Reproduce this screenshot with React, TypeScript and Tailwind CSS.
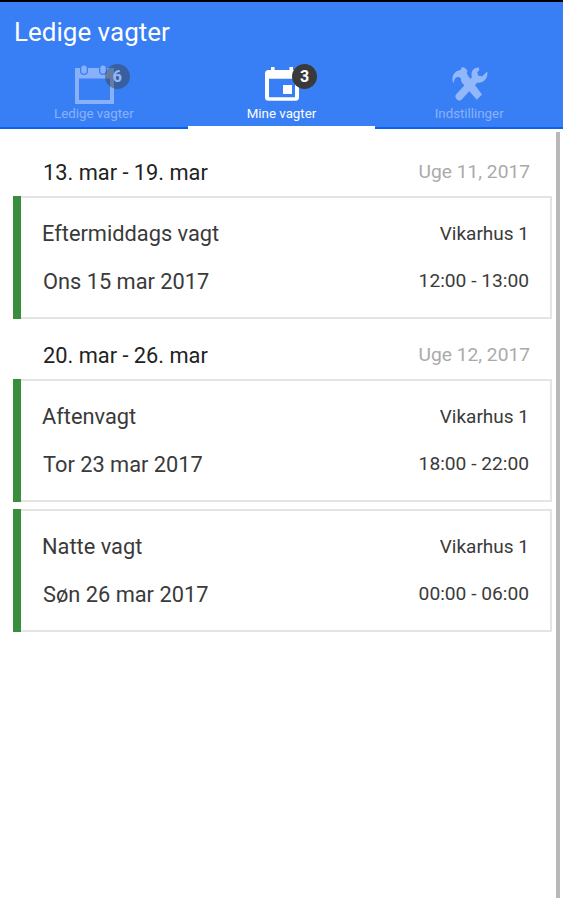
const weeks = [
    {
        range: "13. mar - 19. mar",
        week: "Uge 11, 2017",
        shifts: [
            { name: "Eftermiddags vagt", place: "Vikarhus 1", date: "Ons 15 mar 2017", time: "12:00 - 13:00" },
        ],
    },
    {
        range: "20. mar - 26. mar",
        week: "Uge 12, 2017",
        shifts: [
            { name: "Aftenvagt", place: "Vikarhus 1", date: "Tor 23 mar 2017", time: "18:00 - 22:00" },
            { name: "Natte vagt", place: "Vikarhus 1", date: "Søn 26 mar 2017", time: "00:00 - 06:00" },
        ],
    },
];

function OpenCalendarIcon() {
    return (
        <svg width="40" height="40" viewBox="0 0 40 40" fill="currentColor">
            <path
                fillRule="evenodd"
                d="M1 3H6V6a4 4 0 0 0 8 0V3H25V6a4 4 0 0 0 8 0V3H40V39H1ZM5 13.5V35H36V13.5Z"
            />
            <rect x="7.3" y="0.5" width="5.4" height="8.2" rx="2.7" />
            <rect x="26.3" y="0.5" width="5.4" height="8.2" rx="2.7" />
        </svg>
    );
}

function EventIcon() {
    return (
        <svg width="34" height="40" viewBox="0 0 34 40" fill="currentColor">
            <path
                fillRule="evenodd"
                d="M6 2H9.6V5H24.4V2H28V5H30.5A3.5 3.5 0 0 1 34 8.5V32.3a3.5 3.5 0 0 1-3.5 3.5H3.5A3.5 3.5 0 0 1 0 32.3V8.5A3.5 3.5 0 0 1 3.5 5H6ZM4 13.7V32.3H30V13.7Z"
            />
            <rect x="18" y="20" width="9" height="9" />
        </svg>
    );
}

function ToolsIcon() {
    return (
        <svg width="36" height="35" viewBox="0 0 36 35" fill="currentColor">
            {/* hammer */}
            <path d="M9.5 0.5L12 0.2L15.5 3.6L14.8 6.2L16.6 9.6L30 27.4L24.8 32.8L9.4 15L8.8 11.2Q5 8.6 2.8 12L1.3 16.2Q-0.8 10.8 1.7 7.2Q4.2 3.4 8.7 3Z" />
            {/* wrench */}
            <path d="M26.8 0.5Q21.4 0.4 19.8 5Q19.2 7.6 19.8 10.2L3.8 27.8Q2.8 30 4.4 32Q6.4 34.4 9 33.2L25.4 15.6Q30 16.4 33 13Q36.2 9.4 35.2 4.6L30 9.4L26.2 8.6L25.2 5.2Q28.4 3.2 26.8 0.5Z" />
        </svg>
    );
}

export default function App() {
    return (
        <div className="flex h-[900px] w-full flex-col overflow-hidden bg-white font-['Roboto',sans-serif] text-[#3a3a3a]">
            <header className="h-[129px] shrink-0 border-t-2 border-black bg-[#387ef5] text-white">
                <h1 className="h-[62px] pl-[14px] pt-[11px] text-[26px] leading-[38px]">Ledige vagter</h1>
                <nav className="grid h-[65px] grid-cols-3 text-[13.3px] leading-[18px]">
                    <div className="flex flex-col items-center border-b-2 border-[#0c60ee]">
                        <div className="relative h-[41px] pt-px">
                            <div className="opacity-40">
                                <OpenCalendarIcon />
                            </div>
                            <span className="absolute top-0 left-[31px] flex h-[25px] w-[25px] items-center justify-center rounded-full bg-[#3a3a3a] text-[16px] font-bold leading-none opacity-45">
                                6
                            </span>
                        </div>
                        <span className="opacity-40">Ledige vagter</span>
                    </div>
                    <div className="flex flex-col items-center border-b-[3px] border-white">
                        <div className="relative h-[41px] pt-px pl-px">
                            <EventIcon />
                            <span className="absolute top-0 left-[28px] flex h-[25px] w-[25px] items-center justify-center rounded-full bg-[#3a3a3a] text-[16px] font-bold leading-none">
                                3
                            </span>
                        </div>
                        <span>Mine vagter</span>
                    </div>
                    <div className="flex flex-col items-center border-b-2 border-[#0c60ee]">
                        <div className="h-[41px] pt-[3px] pl-0.5 opacity-45">
                            <ToolsIcon />
                        </div>
                        <span className="opacity-40">Indstillinger</span>
                    </div>
                </nav>
            </header>

            <div className="flex min-h-0 flex-1 justify-between">
                <main className="w-[539px] ml-[13px]">
                    {weeks.map((week, i) => (
                        <section key={week.week} className={i === 0 ? "pt-[19px]" : "pt-[12px]"}>
                            <div className="flex h-12 items-center justify-between pl-[30px] pr-[22px]">
                                <h2 className="pt-0.5 text-[21.8px] text-[#222]">{week.range}</h2>
                                <span className="text-[19.2px] text-[#aaa]">{week.week}</span>
                            </div>
                            <div className="flex flex-col gap-[7px]">
                                {week.shifts.map((shift) => (
                                    <div
                                        key={shift.name}
                                        className="flex h-[123px] border-2 border-l-0 border-[#e4e4e4]"
                                    >
                                        <div className="-my-0.5 w-2 bg-[#388e3c]" />
                                        <div className="flex-1 pt-[11px] pl-[21px] pr-[21px]">
                                            <div className="flex h-12 items-center justify-between">
                                                <span className="pt-0.5 text-[21.8px]">{shift.name}</span>
                                                <span className="pt-0.5 text-[19px]">{shift.place}</span>
                                            </div>
                                            <div className="flex h-12 items-center justify-between">
                                                <span className="pt-0.5 pl-px text-[21.8px]">{shift.date}</span>
                                                <span className="pt-px text-[19.2px]">{shift.time}</span>
                                            </div>
                                        </div>
                                    </div>
                                ))}
                            </div>
                        </section>
                    ))}
                </main>
                <div className="mt-[3px] mr-[3px] mb-[2px] w-1 bg-[#b8b8b8]" />
            </div>
        </div>
    );
}
